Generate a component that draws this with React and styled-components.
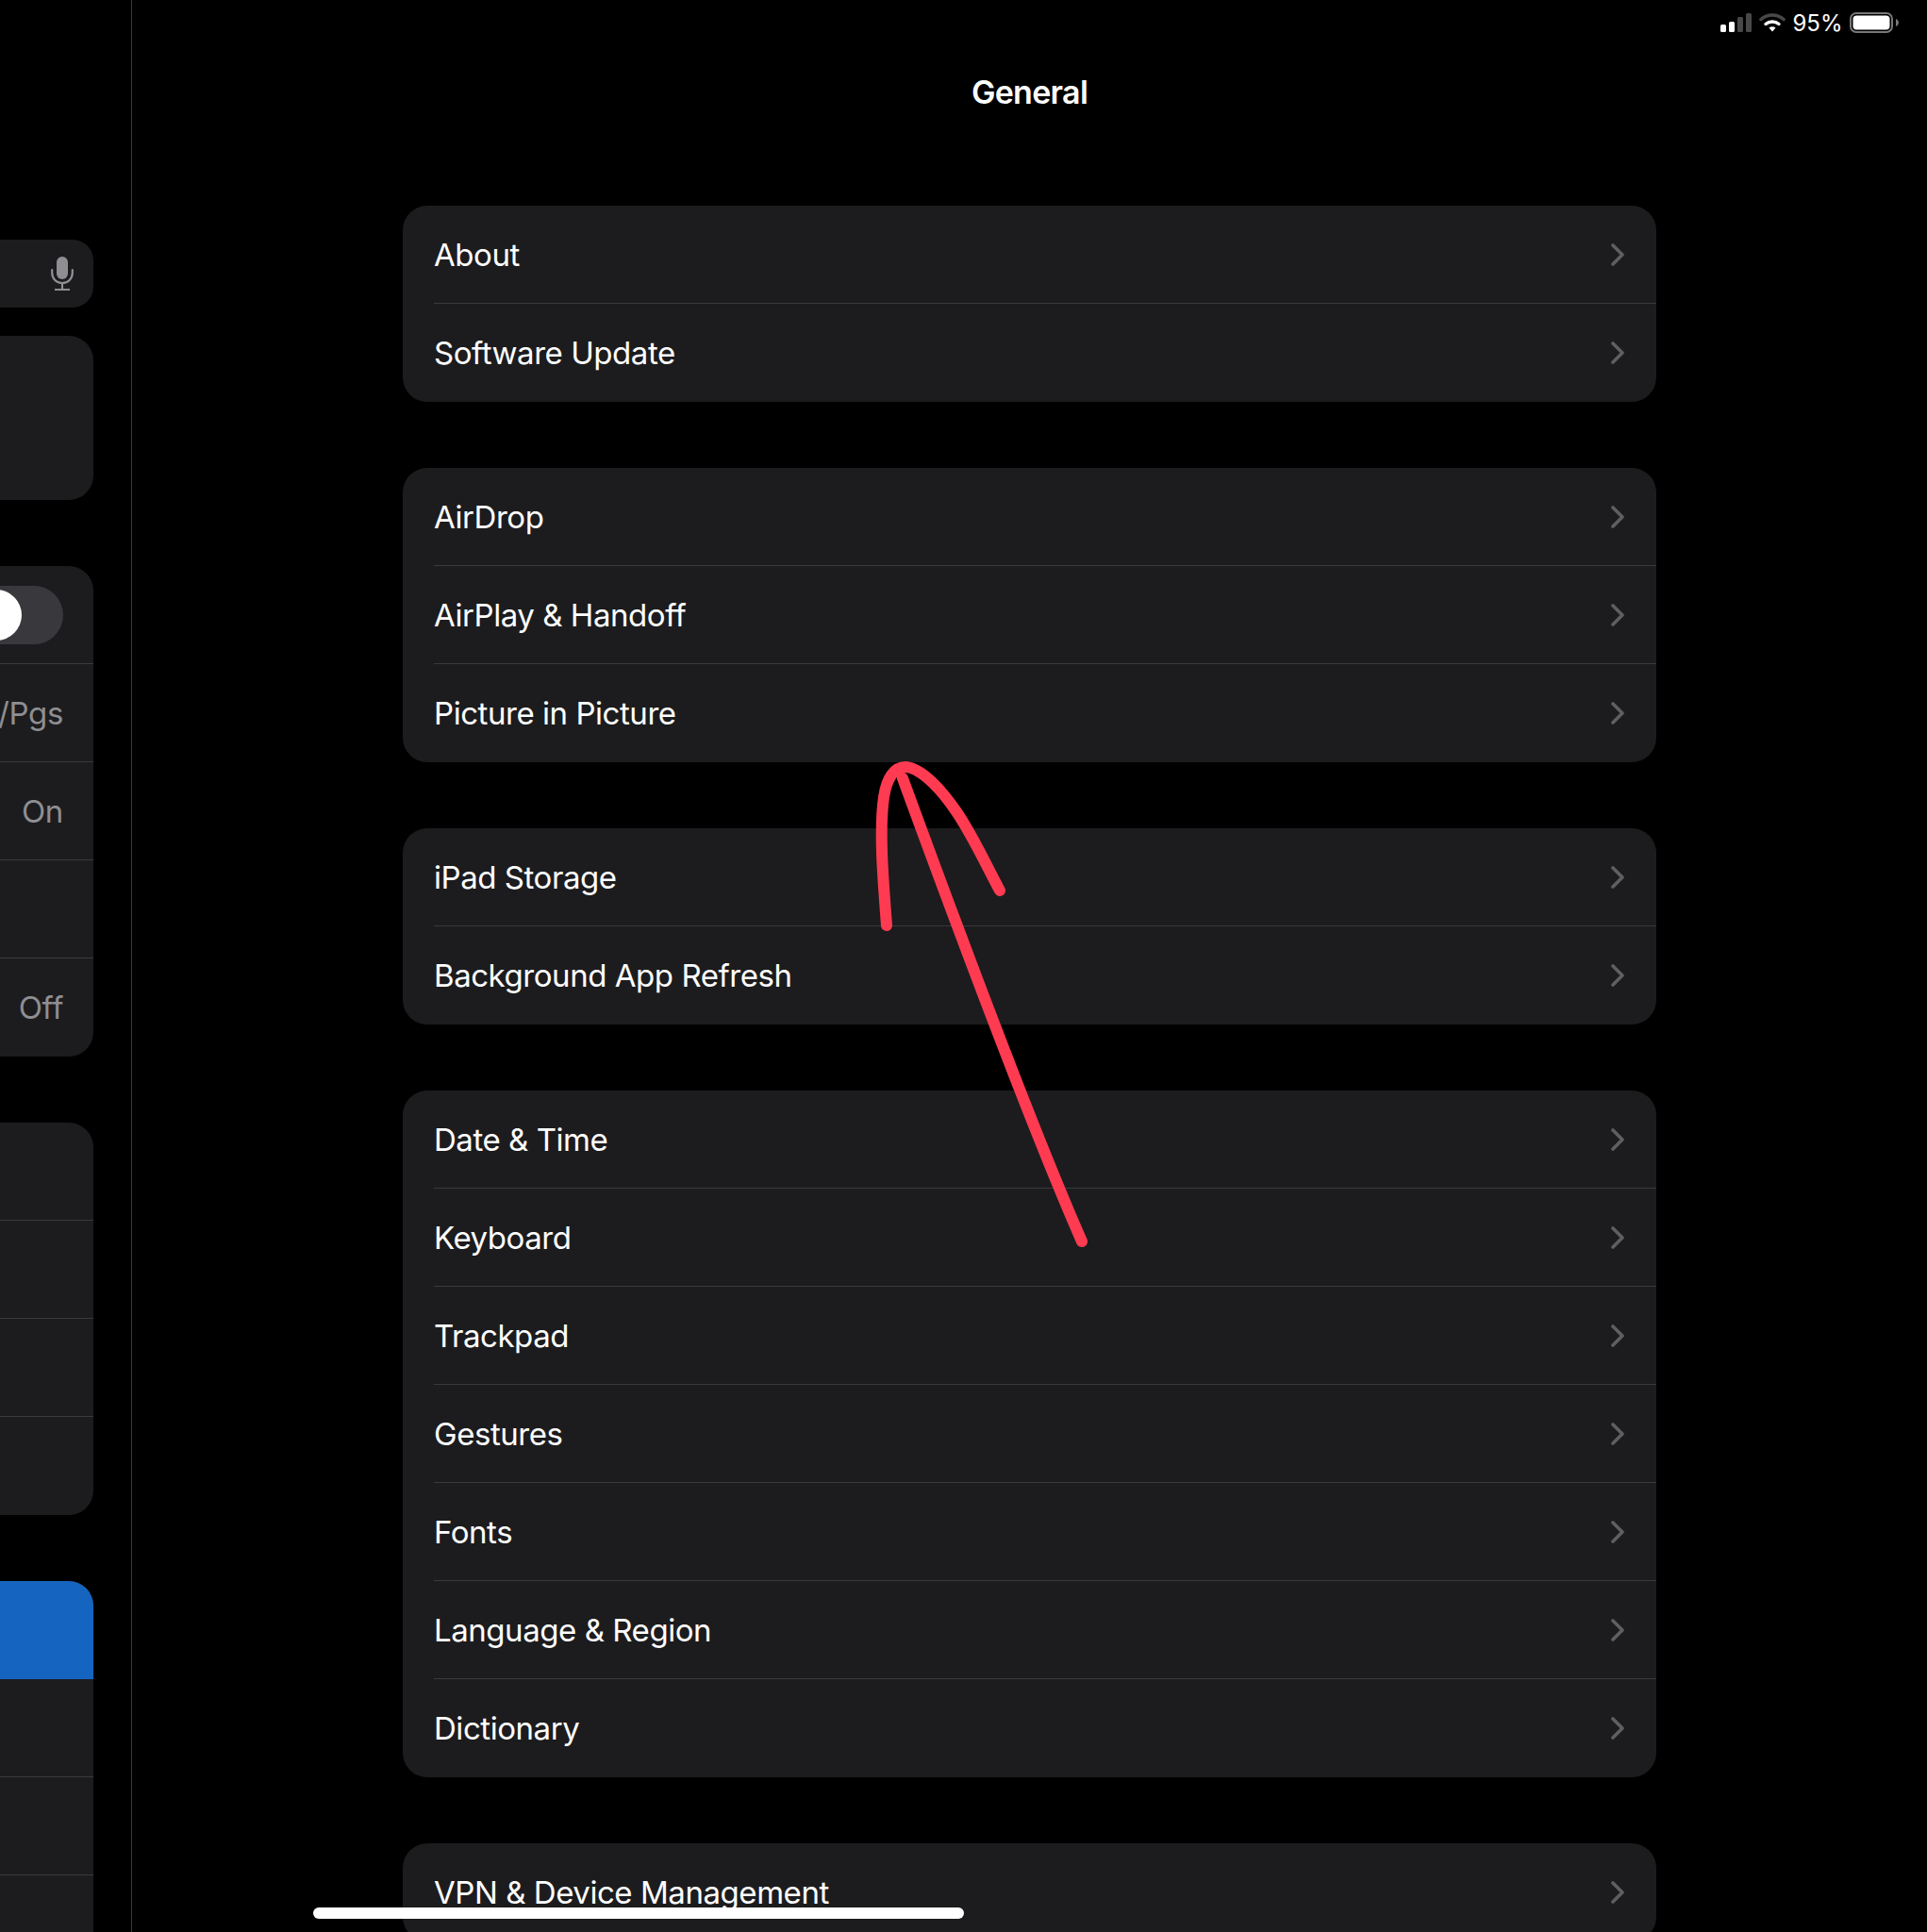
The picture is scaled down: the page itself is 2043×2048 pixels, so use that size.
import styled, { createGlobalStyle } from 'styled-components';

const groups = [
    ['About', 'Software Update'],
    ['AirDrop', 'AirPlay & Handoff', 'Picture in Picture'],
    ['iPad Storage', 'Background App Refresh'],
    ['Date & Time', 'Keyboard', 'Trackpad', 'Gestures', 'Fonts', 'Language & Region', 'Dictionary'],
    ['VPN & Device Management'],
];

const GlobalStyle = createGlobalStyle`
    html, body {
        margin: 0;
        padding: 0;
        background: #000;
    }
    * {
        box-sizing: border-box;
    }
`;

const Page = styled.div`
    position: relative;
    display: flex;
    width: 2043px;
    height: 2048px;
    overflow: hidden;
    background: #000;
    color: #fff;
    font-family: Inter, "Liberation Sans", sans-serif;
`;

const Sidebar = styled.aside`
    flex: 0 0 140px;
    display: flex;
    flex-direction: column;
    gap: 70px;
    height: 100%;
    padding: 254px 40px 0 0;
    border-right: 1px solid #38383a;
    overflow: hidden;
`;

const TopCards = styled.div`
    flex-shrink: 0;
    display: flex;
    flex-direction: column;
    gap: 30px;
`;

const SearchField = styled.div`
    display: flex;
    align-items: center;
    justify-content: flex-end;
    height: 72px;
    padding-right: 21px;
    background: #1c1c1e;
    border-radius: 0 22px 22px 0;
`;

const ProfileCard = styled.div`
    height: 174px;
    background: #1c1c1e;
    border-radius: 0 26px 26px 0;
`;

const SideGroup = styled.div`
    flex-shrink: 0;
    background: #1c1c1e;
    border-radius: 0 26px 26px 0;
    overflow: hidden;
`;

const SideRow = styled.div`
    display: flex;
    align-items: center;
    justify-content: flex-end;
    height: 104px;
    padding-right: 32px;
    white-space: nowrap;
    font-size: 33px;
    letter-spacing: -0.35px;
    color: #8e8e93;
    background: ${(p) => (p.$active ? '#1565c0' : 'transparent')};
    border-bottom: ${(p) => (p.$active ? 'none' : '1px solid #3a3a3c')};

    &:last-child {
        border-bottom: none;
    }
`;

const Toggle = styled.div`
    flex-shrink: 0;
    display: flex;
    align-items: center;
    width: 102px;
    height: 62px;
    padding-left: 4px;
    background: #39393d;
    border-radius: 31px;
`;

const Knob = styled.div`
    width: 54px;
    height: 54px;
    background: #fff;
    border-radius: 50%;
`;

const Main = styled.main`
    flex: 1;
    display: flex;
    flex-direction: column;
    gap: 70px;
    padding: 0 287px;
`;

const Header = styled.header`
    position: relative;
    flex-shrink: 0;
    height: 148px;
    display: flex;
    justify-content: center;
    padding-top: 76px;
`;

const Title = styled.h1`
    margin: 0;
    font-size: 34px;
    line-height: 44px;
    font-weight: 600;
    letter-spacing: -0.7px;
`;

const StatusBar = styled.div`
    position: absolute;
    top: 13px;
    right: -257px;
    display: flex;
    align-items: center;
    height: 22px;
    gap: 7.5px;
    font-size: 24px;
`;

const Group = styled.section`
    flex-shrink: 0;
    background: #1c1c1e;
    border-radius: 26px;
`;

const Row = styled.div`
    height: 104px;
    padding-left: 33px;
`;

const RowInner = styled.div`
    display: flex;
    align-items: center;
    justify-content: space-between;
    height: 100%;
    padding-right: 34px;
    font-size: 33px;
    letter-spacing: -0.45px;
    border-bottom: ${(p) => (p.$last ? 'none' : '1px solid #3a3a3c')};
`;

const ArrowMark = styled.svg`
    position: absolute;
    left: 900px;
    top: 790px;
`;

const HomeBar = styled.div`
    position: absolute;
    left: 332px;
    top: 2022px;
    width: 690px;
    height: 12px;
    background: #fff;
    border-radius: 6px;
`;

const Chevron = () => (
    <svg width="14" height="24" viewBox="0 0 14 24" fill="none">
        <path d="M2 2 L12 12 L2 22" stroke="#5f5f63" strokeWidth="3.6" strokeLinecap="round" strokeLinejoin="round" />
    </svg>
);

const Mic = () => (
    <svg width="24" height="36" viewBox="0 0 24 36" fill="none">
        <rect x="6" y="0" width="12" height="24" rx="6" fill="#8e8e93" />
        <path d="M1.2 14 V17 C1.2 23.5 5.8 28 12 28 C18.2 28 22.8 23.5 22.8 17 V14" stroke="#8e8e93" strokeWidth="2.2" strokeLinecap="round" />
        <path d="M12 28 V34 M4 35 H20" stroke="#8e8e93" strokeWidth="2.2" />
    </svg>
);

const Signal = () => (
    <svg width="33" height="20" viewBox="0 0 33 20">
        <rect x="0" y="12" width="6" height="8" rx="1.5" fill="#fff" />
        <rect x="9" y="9" width="6" height="11" rx="1.5" fill="#fff" />
        <rect x="18" y="4" width="6" height="16" rx="1.5" fill="#48484a" />
        <rect x="27" y="0" width="6" height="20" rx="1.5" fill="#48484a" />
    </svg>
);

const Wifi = () => (
    <svg width="28" height="20" viewBox="0 0 28 20" fill="none">
        <path d="M2 6.5 C9 0.5 19 0.5 26 6.5" stroke="#48484a" strokeWidth="3.6" strokeLinecap="round" />
        <path d="M7 11.5 C11 8.2 17 8.2 21 11.5" stroke="#fff" strokeWidth="3.4" strokeLinecap="round" />
        <path d="M10.5 15.5 C12.5 13.8 15.5 13.8 17.5 15.5 L14 19.5 Z" fill="#fff" />
    </svg>
);

const Battery = () => (
    <svg width="52" height="22" viewBox="0 0 52 22">
        <rect x="1" y="1" width="44" height="20" rx="6" fill="none" stroke="#77777a" strokeWidth="2" />
        <rect x="3.5" y="3.5" width="39" height="15" rx="4" fill="#fff" />
        <path d="M49 7 C51 8 52 9.5 52 11 C52 12.5 51 14 49 15 Z" fill="#77777a" />
    </svg>
);

const App = () => {
    return (
        <Page>
            <GlobalStyle />
            <Sidebar>
                <TopCards>
                    <SearchField>
                        <Mic />
                    </SearchField>
                    <ProfileCard />
                </TopCards>
                <SideGroup>
                    <SideRow>
                        <Toggle>
                            <Knob />
                        </Toggle>
                    </SideRow>
                    <SideRow>/Pgs</SideRow>
                    <SideRow>On</SideRow>
                    <SideRow />
                    <SideRow>Off</SideRow>
                </SideGroup>
                <SideGroup>
                    <SideRow />
                    <SideRow />
                    <SideRow />
                    <SideRow />
                </SideGroup>
                <SideGroup>
                    <SideRow $active />
                    <SideRow />
                    <SideRow />
                    <SideRow />
                </SideGroup>
            </Sidebar>
            <Main>
                <Header>
                    <Title>General</Title>
                    <StatusBar>
                        <Signal />
                        <Wifi />
                        <span>95%</span>
                        <Battery />
                    </StatusBar>
                </Header>
                {groups.map((rows) => (
                    <Group key={rows[0]}>
                        {rows.map((label, i) => (
                            <Row key={label}>
                                <RowInner $last={i === rows.length - 1}>
                                    {label}
                                    <Chevron />
                                </RowInner>
                            </Row>
                        ))}
                    </Group>
                ))}
            </Main>
            <ArrowMark width="260" height="540" viewBox="0 0 260 540" fill="none">
                <path
                    d="M57 35 C90 125 185 385 247 526 M40 191 C36 140 32 90 37 55 C40 35 48 23 60 23 C78 24 100 50 113 69 C130 93 147 130 160 154"
                    stroke="#ff3b52"
                    strokeWidth="12"
                    strokeLinecap="round"
                    strokeLinejoin="round"
                />
            </ArrowMark>
            <HomeBar />
        </Page>
    );
};

export default App;
